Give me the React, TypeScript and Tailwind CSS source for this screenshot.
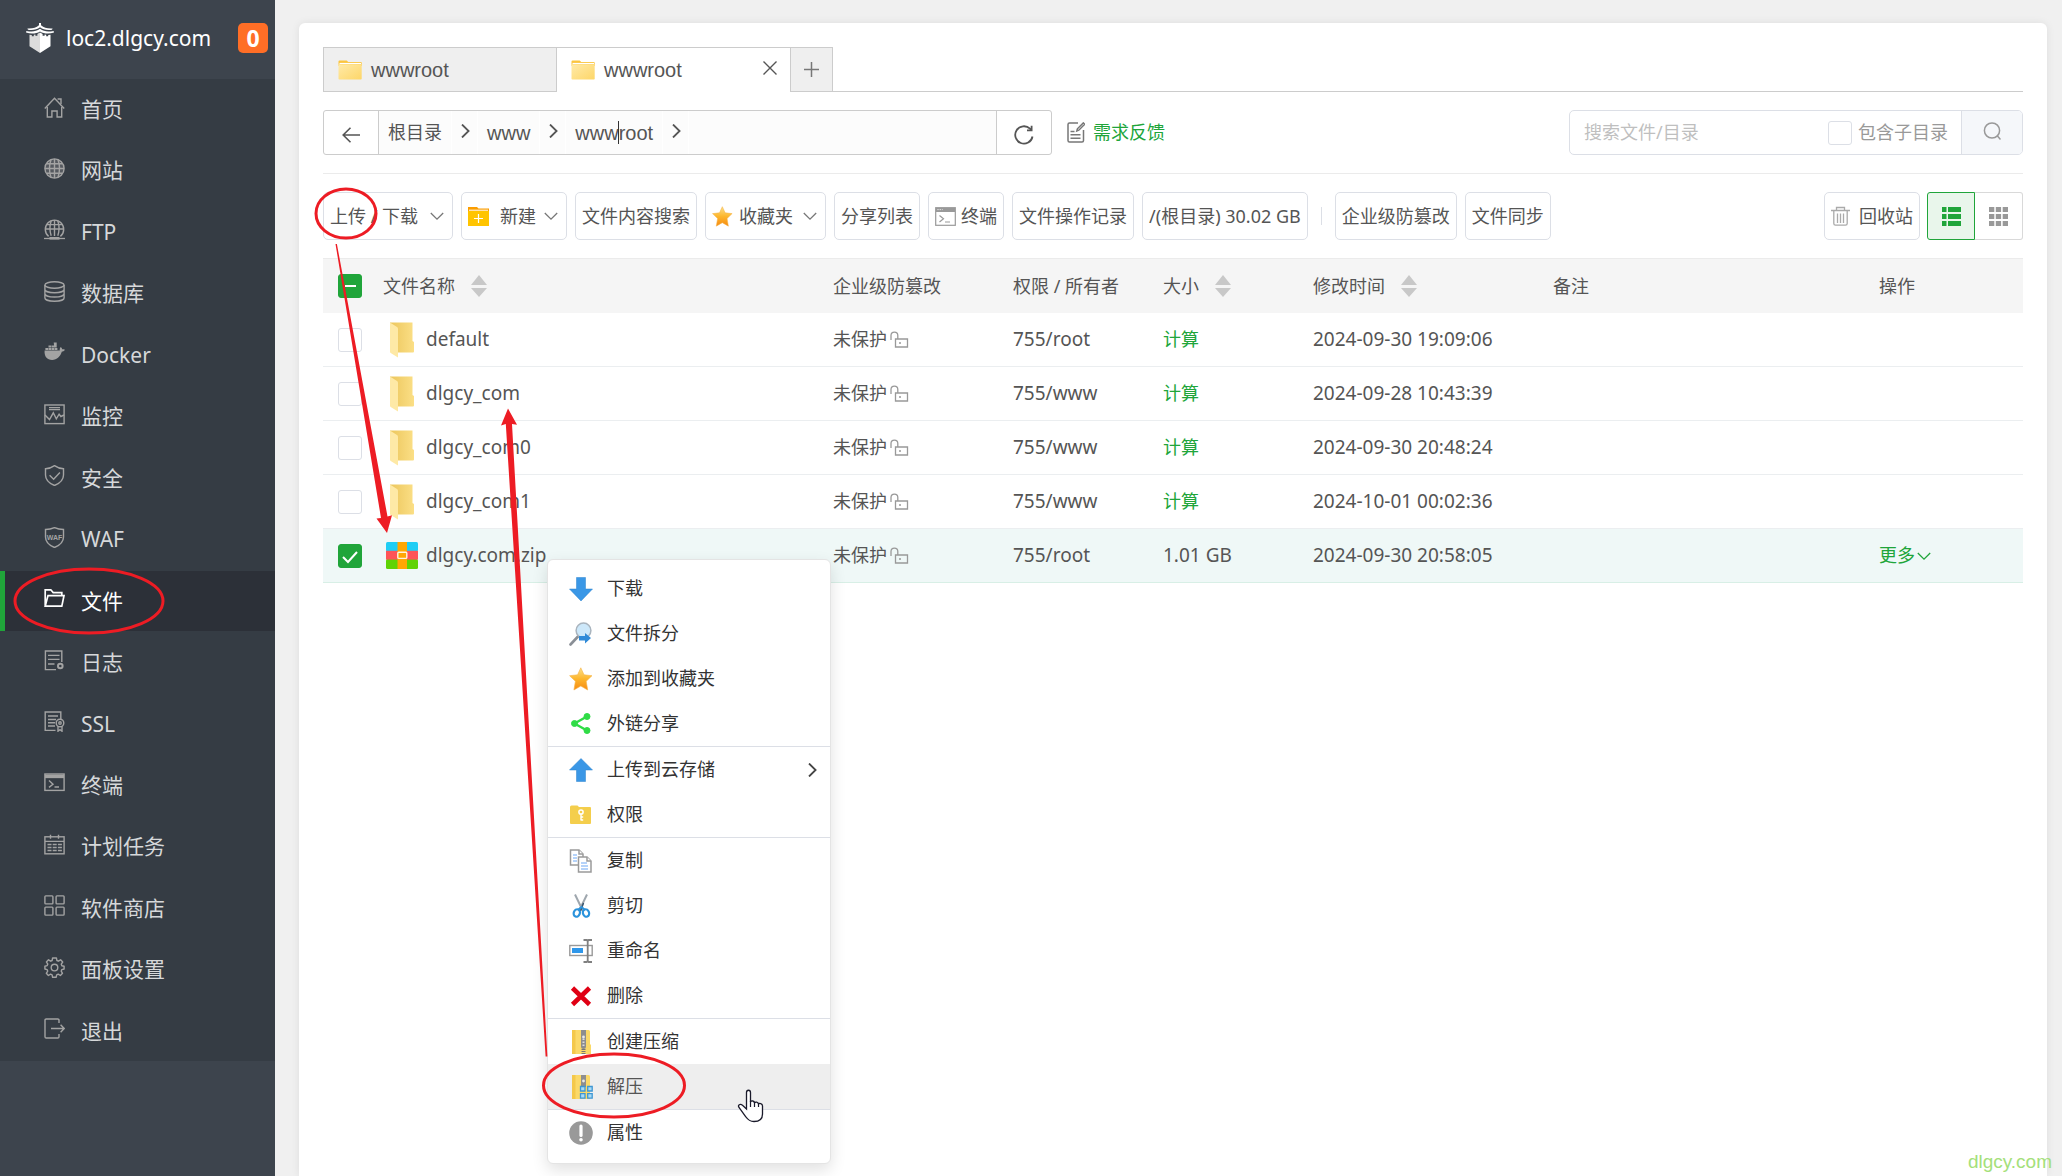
import { useState } from "react";
import type { ReactNode } from "react";
import clsx from "clsx";

/* ---------- icons ---------- */

function Line({ children, className }: { children: ReactNode; className?: string }) {
  return (
    <svg
      viewBox="0 0 21 21"
      fill="none"
      stroke="currentColor"
      strokeWidth="1.4"
      className={clsx("shrink-0", className ?? "size-[21px]")}
      aria-hidden="true"
    >
      {children}
    </svg>
  );
}

const navIcons: Record<string, ReactNode> = {
  home: (
    <>
      <path d="M.8 11.4 10.5 1.2l9.7 10.2" />
      <path d="M3.3 10v10h4.6v-6h5.2v6h4.6V10M13.6 2h3.4v5" />
    </>
  ),
  site: (
    <>
      <circle cx="10.5" cy="10.5" r="9.6" fill="currentColor" fillOpacity=".3" />
      <path d="M1 10.5h19M2.6 5.8h15.8M2.6 15.2h15.8M10.5 1v19M7 1.8c-1.8 5-1.8 12.4 0 17.4M14 1.8c1.8 5 1.8 12.4 0 17.4" />
    </>
  ),
  ftp: (
    <>
      <path d="M4.6 17.4a9.2 9.2 0 1 1 11.8 0" />
      <path d="M1.5 10h18M3 5.6h15M10.5 1v16M7.2 1.8c-1.6 5-1.6 10.5 0 15M13.8 1.8c1.6 5 1.6 10.5 0 15" />
      <path d="M0 19.5h21" strokeWidth="1.3" />
      <path d="M5.5 19.3h10" strokeWidth="2.6" />
    </>
  ),
  db: (
    <>
      <ellipse cx="10.5" cy="4" rx="9.6" ry="3.2" />
      <path d="M.9 4v13c0 1.8 4.3 3.2 9.6 3.2s9.6-1.4 9.6-3.2V4M.9 8.500c0 1.8 4.3 3.2 9.6 3.2s9.6-1.4 9.6-3.2M.9 12.8c0 1.8 4.3 3.2 9.6 3.2s9.6-1.4 9.6-3.2" />
    </>
  ),
  docker: (
    <g fill="currentColor" stroke="none">
      <path d="M.6 8.400h15.200c-.2-1.300.1-2.400.9-3.300.9.600 1.400 1.400 1.500 2.200.9-.2 1.800-.1 2.700.4-.5 1.200-1.500 1.800-3 1.900-1.600 5-4.800 8.300-9.800 8.300C3.200 17.900.1 14.400.6 8.400z" />
      <path d="M1.400 6h2.700v2H1.400zM4.500 6h2.700v2H4.500zM7.600 6h2.700v2H7.600zM10.700 6h2.700v2h-2.700zM4.500 3.400h2.700v2.200H4.500zM7.600 3.400h2.700v2.200H7.600zM9.700.4h3v5h-2.400z" />
    </g>
  ),
  monitor: (
    <>
      <rect x=".9" y="1" width="19.2" height="18.6" />
      <path d="M5 3.6h11M5 5.6h11" strokeWidth="1.2" />
      <path d="m1 11 4.5 4.6 3.8-6.8 3 6 2.8-4.6 1.8 2.3L20 11" />
    </>
  ),
  shield: (
    <>
      <path d="M10.5.6c2.8 2 5.7 3 9 3.1v6.2c0 4.5-3.1 8-9 10.6-5.9-2.6-9-6.1-9-10.6V3.7c3.3-.1 6.2-1.1 9-3.1z" />
      <path d="m5.6 10.3 4 4 6.3-6.8" />
    </>
  ),
  waf: (
    <>
      <path d="M10.5.6c2.8 1.3 5.7 1.9 9 1.9v7.4c0 4.5-3.1 8-9 10.6-5.900-2.6-9-6.1-9-10.6V2.5c3.3 0 6.2-.6 9-1.9z" />
      <text
        x="10.5"
        y="12.5"
        textAnchor="middle"
        fill="currentColor"
        stroke="none"
        className="font-['Liberation_Sans',Arial,sans-serif] text-[7px] font-bold"
      >
        WAF
      </text>
    </>
  ),
  folder: (
    <path d="M1.2 18V1.8h5.6l2.4 2.8h8.6v2.8M1.2 18.2 4 7.6h16L17.8 18.2z" strokeWidth="1.7" />
  ),
  log: (
    <>
      <path d="M12 19.6H1.4V1h16.4v11M4 5.4h11.5M4 9.4h11.5M4 14h6.5" />
      <circle cx="16.3" cy="16" r="2.3" strokeWidth="2" />
    </>
  ),
  ssl: (
    <>
      <path d="M11.5 19.4H1.2V1h15.6v7M4 5h10M4 8.5h8M4 11.8h7M4 15h7" />
      <circle cx="16" cy="12" r="3.8" />
      <circle cx="16" cy="12" r="1.2" />
      <path d="M14 15.2v5l2-1.5 2 1.5v-5" />
    </>
  ),
  terminal: (
    <>
      <rect x=".9" y="2" width="19.2" height="16.4" />
      <path d="M1 4.4h19" strokeWidth="3.5" />
      <path d="m5 8.6 4 3.6-4 3.2M10.5 15H15" />
    </>
  ),
  calendar: (
    <>
      <rect x=".9" y="2.8" width="19.2" height="17" />
      <path d="M6.5.8v4M14.5.8v4M1 7.4h19" />
      <path d="M3.5 10.5H18M3.5 13.5H18M3.5 16.5H18" strokeDasharray="4 1.2" />
    </>
  ),
  store: (
    <>
      <rect x=".9" y=".9" width="8" height="8" rx=".8" />
      <rect x="12.1" y=".9" width="8" height="8" rx=".8" />
      <rect x=".9" y="12.1" width="8" height="8" rx=".8" />
      <rect x="12.1" y="12.1" width="8" height="8" rx=".8" />
    </>
  ),
  gear: (
    <>
      <path
        strokeLinejoin="round"
        d="M8.6 1h3.8l.5 2.5 1.5.7 2.200-1.4 2.100 2.200-1.4 2.200.5 1.500 2.300.5v2.800l-2.300.6-.6 1.600 1.300 2.100-2.100 2.200-2.200-1.300-1.500.6-.6 2.500H8.600L8.100 17.800l-1.500-.6-2.200 1.300-2.100-2.200 1.400-2.200-.6-1.500L.9 12V9.200l2.300-.6.6-1.500-1.400-2.200 2.100-2.100 2.200 1.400 1.400-.7z"
      />
      <circle cx="10.5" cy="10.6" r="3.3" />
    </>
  ),
  exit: (
    <path d="M15 5V2.2C15 1.500 14.500 1 13.800 1H2.200C1.500 1 1 1.500 1 2.200v16.600c0 .7.500 1.200 1.200 1.200h11.600c.7 0 1.200-.5 1.200-1.200V16M7 10.500h13M16.600 6.700l3.600 3.800-3.600 3.800" />
  ),
};

function Logo() {
  return (
    <svg viewBox="0 0 28 30" className="h-[30px] w-7 shrink-0" fill="#fff" aria-hidden="true">
      <path d="M13 0h2v2.200c3 2.600 6 3.400 11.600 3.200L26 6.800C21 7.600 17 6.600 14 4.300 11 6.600 7 7.600 2 6.800L1.400 5.400C7 5.600 10 4.800 13 2.200z" />
      <path d="M14 5.800c4 3 8 3.200 13.600 2.200l.4 1.500c-5 1.600-10.400 1.200-14-1.100C10.400 10.700 5 11.100 0 9.500L.4 8C6 9 10 8.800 14 5.800z" />
      <path d="M14 9.600c1 .6 1.800 1 2.600 1.300v1.800h2v-1.300l1.600.3v1.600h2v-1.400l2.300-.1v11.400L14 30z" />
      <path d="M14 9.600c-1 .6-1.800 1-2.600 1.300v1.800h-2v-1.300l-1.600.3v1.600h-2v-1.400l-2.300-.1v11.400L14 30z" fill="#dcdcdc" />
    </svg>
  );
}

function Chevron({ dir = "down", className }: { dir?: "down" | "right"; className?: string }) {
  return (
    <svg
      viewBox="0 0 14 14"
      fill="none"
      stroke="currentColor"
      className={clsx("size-3.5 shrink-0", className)}
      aria-hidden="true"
    >
      {dir === "down" ? (
        <path d="M.8 4l6.2 6.200L13.200 4" strokeWidth="1.3" />
      ) : (
        <path d="M4 .5 10.600 7 4 13.500" strokeWidth="1.8" />
      )}
    </svg>
  );
}

function TabFolder() {
  return (
    <svg viewBox="0 0 24 20" className="h-5 w-6 shrink-0" aria-hidden="true">
      <defs>
        <linearGradient id="tabFolder" x1="0" x2="1" y1="0" y2="1">
          <stop offset="0" stopColor="#ffeaa8" />
          <stop offset="1" stopColor="#fdd668" />
        </linearGradient>
      </defs>
      <path d="M.5 1.5Q.5.5 1.500.5h7.200l1.500 1.500H23q.7 0 .7 1V6H.5z" fill="#fbc53f" />
      <path d="M1.500 3.500H23" stroke="#fff" strokeWidth="1.2" />
      <path d="M.5 4.300h23.200v14.400q0 .8-.8.8H1.300q-.8 0-.8-.8z" fill="url(#tabFolder)" />
    </svg>
  );
}

function RowFolder() {
  return (
    <svg viewBox="0 0 32 36" className="h-9 w-8 shrink-0" aria-hidden="true">
      <defs>
        <linearGradient id="rowFolder" x1="0" x2="1" y1="0" y2="0">
          <stop offset="0" stopColor="#ecc65c" />
          <stop offset="1" stopColor="#fbdf86" />
        </linearGradient>
      </defs>
      <path d="M4 .5h22.500V19l1.500 1v9.500q0 1-1 1H11z" fill="url(#rowFolder)" />
      <path d="M4 .5 11 5q1 .7 1 2v28.500L4.700 31Q4 30.500 4 29.500z" fill="#fee9a6" />
    </svg>
  );
}

function ZipIcon() {
  return (
    <svg viewBox="0 0 32 27" className="h-[27px] w-8 shrink-0" aria-hidden="true">
      <rect width="32" height="9.5" rx="1.5" fill="#1fcdf4" />
      <rect y="17" width="32" height="10" rx="1.5" fill="#5fd305" />
      <rect y="8.8" width="32" height="8.800" fill="#fe5457" />
      <rect x="11.5" width="9.5" height="27" fill="#ffa703" />
      <rect x="11.800" y="10.200" width="9" height="6.200" rx="1" fill="#ffa703" stroke="#fff3dc" strokeWidth="1.4" />
    </svg>
  );
}

function Star({ className = "size-6" }: { className?: string }) {
  return (
    <svg viewBox="0 0 24 24" className={clsx("shrink-0", className)} aria-hidden="true">
      <defs>
        <linearGradient id="star" x1="0" x2="0" y1="0" y2="1">
          <stop offset="0" stopColor="#fbe08a" />
          <stop offset=".5" stopColor="#fdb62c" />
          <stop offset="1" stopColor="#f68a12" />
        </linearGradient>
      </defs>
      <path
        d="m11.800.8 3.200 7 8 .9-5.800 5.600 1.500 8.700-6.900-4-6.900 4 1.500-8.700L.6 8.700l8-.9z"
        fill="url(#star)"
        stroke="#f6b344"
        strokeWidth=".6"
      />
    </svg>
  );
}

function WindowIcon() {
  return (
    <svg viewBox="0 0 21 19" className="h-[19px] w-[21px] shrink-0" fill="none" stroke="#999" aria-hidden="true">
      <rect x=".7" y=".7" width="19.6" height="17.6" strokeWidth="1.2" />
      <path d="M1 3h19" strokeWidth="4" />
      <path d="m4.500 8.500 4 3.300-4 3.200M10 15h5" strokeWidth="1.2" />
      <path d="M2.500 2.600h5" stroke="#fff" strokeDasharray="1 1.2" />
    </svg>
  );
}

function SortIcon() {
  return (
    <svg viewBox="0 0 16 22" className="h-[22px] w-4" fill="#c8c8c8" aria-hidden="true">
      <path d="M8 0l8 10H0zM0 13h16l-8 9z" />
    </svg>
  );
}

function LockIcon() {
  return (
    <svg
      viewBox="0 0 19 17"
      className="h-[17px] w-[19px] shrink-0"
      fill="none"
      stroke="#999"
      strokeWidth="1.3"
      aria-hidden="true"
    >
      <path d="M1 9V4.500a3.400 3.400 0 0 1 6.800 0V8M5.500 8h12v8h-12zM9 12h2" />
    </svg>
  );
}

const ctxIcons: Record<string, ReactNode> = {
  download: <path d="M7.500.5h9V12h7L12 24 .5 12h7z" fill="#3a97e6" stroke="#2b82cf" strokeWidth=".5" />,
  split: (
    <>
      <path d="M1.500 22.500 9 14.500" stroke="#8a8f96" strokeWidth="2.6" strokeLinecap="round" />
      <circle cx="14.5" cy="8.5" r="7.4" fill="#cde8fa" stroke="#a9b4be" strokeWidth="1.5" />
      <path d="M10 14h6v-3l6 5-6 5.500v-3h-6z" fill="#2f8ad8" />
    </>
  ),
  share: (
    <g fill="#2fdc46" stroke="#2fdc46">
      <path d="M18 4.500 5.500 11.500 18 18.500" fill="none" strokeWidth="2.4" />
      <circle cx="18" cy="4.500" r="3" />
      <circle cx="5.500" cy="11.500" r="3" />
      <circle cx="18" cy="18.500" r="3" />
    </g>
  ),
  upload: <path d="M7.500 23.500h9V12h7L12 .5.500 12h7z" fill="#3a97e6" stroke="#2b82cf" strokeWidth=".5" />,
  perm: (
    <>
      <path d="M1 4q0-1.500 1.500-1.500h6L10 4h11q1 0 1 1v15q0 1-1 1H2q-1 0-1-1z" fill="#f4ce4c" />
      <circle cx="12" cy="9" r="2.1" fill="none" stroke="#fff" strokeWidth="1.5" />
      <path d="M12 11v6.500M12 14h2.200M12 17h2.200" stroke="#fff" strokeWidth="1.4" />
    </>
  ),
  copy: (
    <g fill="#fff" stroke="#9a9a9a" strokeWidth="1.5">
      <path d="M1.500 1H10l4 4v11H1.500z" />
      <path d="M9.500 8H18l4 4v11H9.500z" />
      <path d="M18 8v4h4M10 1v4h4" />
      <path d="M4 6h4M4 9h4M4 12h4M12 14h6M12 17h7M12 20h7" stroke="#6ca8f5" strokeWidth="1.2" />
    </g>
  ),
  cut: (
    <>
      <path d="M6 .5 14 17M18 .5 10 17" stroke="#9fa7ae" strokeWidth="2" />
      <path d="m14.500 9-3 8" stroke="#36516a" strokeWidth="1.5" />
      <ellipse cx="7.8" cy="19" rx="3" ry="3.800" fill="none" stroke="#2b93dc" strokeWidth="2.2" transform="rotate(20 7.8 19)" />
      <ellipse cx="17" cy="19" rx="3" ry="3.800" fill="none" stroke="#2b93dc" strokeWidth="2.2" transform="rotate(-20 17 19)" />
      <path d="m9.500 15.500 3-2.500 3 2.500" stroke="#2b93dc" strokeWidth="2" fill="none" />
    </>
  ),
  rename: (
    <>
      <rect x=".8" y="6.500" width="22.400" height="10" fill="#fff" stroke="#999" strokeWidth="1.4" />
      <rect x="3" y="9" width="11" height="5" fill="#2f97ea" />
      <path d="M14.500 1h3.200l1 1 1-1H23M18.700 2v20M14.500 23h3.200l1-1 1 1H23" fill="none" stroke="#808080" strokeWidth="1.8" />
    </>
  ),
  remove: <path d="m3.500 4 17 16.500M20.500 4l-17 16.500" stroke="#e00014" strokeWidth="4.6" />,
  zip: (
    <>
      <path d="M3 0h16.500q1.500 0 1.500 1.500V14l1 1v9H3z" fill="#fbd968" />
      <path d="M3 0h3.500v24H3z" fill="#f4c84a" />
      <path d="M12 0h5v17q0 2-2.500 2T12 17z" fill="#8e8e8e" />
      <circle cx="14.500" cy="7" r="1.4" fill="#e9e9e9" />
      <path d="M14.500 8.500v9" stroke="#ddd" strokeDasharray="1.5 1.5" strokeWidth="2" />
      <path d="M14.500 19v5" stroke="#777" strokeDasharray="1 1" strokeWidth="4" />
    </>
  ),
  unzip: (
    <>
      <path d="M3 0h16.500q1.500 0 1.500 1.500V24H3z" fill="#fbd968" />
      <path d="M3 0h3.500v24H3z" fill="#f4c84a" />
      <path d="M12 0h5v12h-5z" fill="#8e8e8e" />
      <circle cx="14.500" cy="6" r="1.4" fill="#e9e9e9" />
      <path
        d="M11.500 11.500h4.500v4.500h-4.500zM18.700 11.500h4.500v4.500h-4.500zM11.500 18.700h4.500v4.500h-4.500zM18.700 18.700h4.500v4.500h-4.500z"
        fill="#a9dbf7"
        stroke="#3f97d2"
        strokeWidth="1.3"
      />
    </>
  ),
  info: (
    <>
      <circle cx="12" cy="12" r="11.8" fill="#999" />
      <path d="M12 5v9.500" stroke="#fff" strokeWidth="3.2" strokeLinecap="round" />
      <circle cx="12" cy="18.800" r="1.8" fill="#fff" />
    </>
  ),
};

/* ---------- data ---------- */

const nav = [
  { icon: "home", label: "首页" },
  { icon: "site", label: "网站" },
  { icon: "ftp", label: "FTP" },
  { icon: "db", label: "数据库" },
  { icon: "docker", label: "Docker" },
  { icon: "monitor", label: "监控" },
  { icon: "shield", label: "安全" },
  { icon: "waf", label: "WAF" },
  { icon: "folder", label: "文件", active: true },
  { icon: "log", label: "日志" },
  { icon: "ssl", label: "SSL" },
  { icon: "terminal", label: "终端" },
  { icon: "calendar", label: "计划任务" },
  { icon: "store", label: "软件商店" },
  { icon: "gear", label: "面板设置" },
  { icon: "exit", label: "退出" },
];

const files = [
  { name: "default", owner: "755/root", time: "2024-09-30 19:09:06" },
  { name: "dlgcy_com", owner: "755/www", time: "2024-09-28 10:43:39" },
  { name: "dlgcy_com0", owner: "755/www", time: "2024-09-30 20:48:24" },
  { name: "dlgcy_com1", owner: "755/www", time: "2024-10-01 00:02:36" },
  { name: "dlgcy.com.zip", owner: "755/root", size: "1.01 GB", time: "2024-09-30 20:58:05" },
];

const menuGroups = [
  [
    { icon: "download", label: "下载" },
    { icon: "split", label: "文件拆分" },
    { icon: "star", label: "添加到收藏夹" },
    { icon: "share", label: "外链分享" },
  ],
  [
    { icon: "upload", label: "上传到云存储", sub: true },
    { icon: "perm", label: "权限" },
  ],
  [
    { icon: "copy", label: "复制" },
    { icon: "cut", label: "剪切" },
    { icon: "rename", label: "重命名" },
    { icon: "remove", label: "删除" },
  ],
  [
    { icon: "zip", label: "创建压缩" },
    { icon: "unzip", label: "解压", hover: true },
  ],
  [{ icon: "info", label: "属性" }],
];

/* ---------- parts ---------- */

function Sidebar() {
  return (
    <aside className="w-[275px] shrink-0 bg-[#3d444d]">
      <div className="flex h-[79px] items-start pl-[26px] pr-[7px] pt-[23px]">
        <Logo />
        <span className="ml-3 text-[21px] leading-[30px] text-white">loc2.dlgcy.com</span>
        <span className="ml-auto size-[30px] rounded-[5px] bg-[#ff6e26] text-center text-[23px] font-bold leading-[30px] text-white">
          0
        </span>
      </div>
      <nav className="flex h-[982px] flex-col justify-between bg-[#353c44]">
        {nav.map((item) => (
          <a
            key={item.label}
            href="#"
            className={clsx(
              "flex h-[60px] items-center border-l-[5px] pl-[39px] text-[21px] leading-[30px]",
              item.active ? "border-[#20a53a] bg-[#2c3038] text-white" : "border-transparent text-[#d6d8da]",
            )}
          >
            <span className={clsx("mb-1", item.active ? "text-white" : "text-[#a3a3a3]")}>
              <Line>{navIcons[item.icon]}</Line>
            </span>
            <span className="ml-4">{item.label}</span>
          </a>
        ))}
      </nav>
    </aside>
  );
}

function Tabs() {
  return (
    <div className="flex h-[45px] border-b border-[#ccc] font-['Liberation_Sans',Arial,sans-serif] text-[20px] text-[#555]">
      <button className="flex h-[45px] w-[234px] items-center border border-[#ccc] bg-[#efefef] pl-3.5">
        <TabFolder />
        <span className="ml-[9px]">wwwroot</span>
      </button>
      <div className="flex h-[45px] w-[233px] items-center border-t border-[#ccc] bg-white pl-3.5 pr-[13px]">
        <button className="flex flex-1 items-center">
          <TabFolder />
          <span className="ml-[9px]">wwwroot</span>
        </button>
        <button aria-label="关闭" className="mb-1">
          <svg viewBox="0 0 14 14" className="size-3.5" stroke="#555" strokeWidth="1.4">
            <path d="M.5.5l13 13M13.500.5l-13 13" />
          </svg>
        </button>
      </div>
      <button
        aria-label="新标签"
        className="flex h-[45px] w-[43px] items-center justify-center border border-[#ccc] bg-[#efefef]"
      >
        <svg viewBox="0 0 15 15" className="size-[15px]" stroke="#777" strokeWidth="1.5">
          <path d="M7.500 0v15M0 7.500h15" />
        </svg>
      </button>
    </div>
  );
}

function PathBar() {
  return (
    <div className="mt-[18px] flex h-[45px] items-center justify-between">
      <div className="flex h-full items-center">
        <div className="flex h-full w-[729px] rounded-[3px] border border-[#ccc]">
          <button aria-label="后退" className="flex w-[55px] items-center justify-center border-r border-[#ccc]">
            <svg viewBox="0 0 18 16" className="mt-1 h-4 w-[18px]" fill="none" stroke="#555" strokeWidth="1.6">
              <path d="M18 8H1.500M8.500.8 1.200 8l7.300 7.200" />
            </svg>
          </button>
          <div className="flex flex-1 bg-[#fcfcfc] text-[18px] text-[#555]">
            {["根目录", "www", "wwwroot"].map((crumb, i) => (
              <div key={crumb} className="flex">
                <a
                  href="#"
                  className={clsx(
                    "flex items-center border-r border-white px-[9px]",
                    i > 0 && "font-['Liberation_Sans',Arial,sans-serif] text-[20px]",
                  )}
                >
                  {crumb}
                </a>
                <span className="flex w-[26px] items-center justify-center border-r border-white">
                  <Chevron dir="right" className="mb-1" />
                </span>
              </div>
            ))}
          </div>
          <button aria-label="刷新" className="flex w-[55px] items-center justify-center border-l border-[#ccc]">
            <svg viewBox="0 0 20 20" className="mt-1 size-5" fill="none" stroke="#555" strokeWidth="1.8">
              <path d="M18.500 11.500A8.700 8.700 0 1 1 16 3.700l1.200 1.200" />
              <path d="M17.600.8v4.600H13" />
            </svg>
          </button>
        </div>
        <a href="#" className="ml-[15px] flex items-center text-[18px] text-[#20a53a]">
          <svg
            viewBox="0 0 18 21"
            className="h-[21px] w-[18px]"
            fill="none"
            stroke="#777"
            strokeWidth="1.5"
            aria-hidden="true"
          >
            <path d="M11 1H2.500Q1 1 1 2.500v16Q1 20 2.500 20H15q1.500 0 1.500-1.500V8" />
            <path d="M3.500 9.500h4M3.500 12.800h10M3.500 16.200h10M9.800 9l.6-2.200L16.300.9l1.400 1.400-5.900 5.900z" />
          </svg>
          <span className="ml-2">需求反馈</span>
        </a>
      </div>

      <form className="flex h-full w-[454px] overflow-hidden rounded-[5px] border border-[#dcdfe6] text-[18px]">
        <input
          type="text"
          aria-label="搜索文件/目录"
          placeholder="搜索文件/目录"
          className="min-w-0 flex-1 pl-3.5 text-[#555] outline-none placeholder:text-[#bfbfbf]"
        />
        <label className="flex items-center gap-1.5 pr-[13px] text-[#999]">
          <input type="checkbox" className="size-6 appearance-none rounded-[3px] border border-[#dcdfe6] bg-white" />
          包含子目录
        </label>
        <button
          type="button"
          aria-label="搜索"
          className="flex w-[61px] items-center justify-center border-l border-[#dcdfe6] bg-[#f5f7fa]"
        >
          <svg viewBox="0 0 18 18" className="mb-1 size-[18px]" fill="none" stroke="#999" strokeWidth="1.5">
            <circle cx="9" cy="8.500" r="7.6" />
            <path d="m14 13.500 3.500 4" />
          </svg>
        </button>
      </form>
    </div>
  );
}

function ToolButton({ children }: { children: ReactNode }) {
  return (
    <button className="flex h-12 shrink-0 items-center rounded-[5px] border border-[#dcdfe6] bg-white px-1.5 text-[18px] text-[#555]">
      {children}
    </button>
  );
}

function Toolbar() {
  return (
    <div className="mt-[18px] flex items-center justify-between">
      <div className="flex items-center gap-2">
        <ToolButton>
          上传 / 下载 <Chevron className="ml-3 mr-0.5 text-[#777]" />
        </ToolButton>
        <ToolButton>
          <svg viewBox="0 0 21 19" className="h-[19px] w-[21px]" aria-hidden="true">
            <path d="M0 0h9l1.500 1.500H21V4H0z" fill="#fb9d00" />
            <path d="M0 4h21v15H0z" fill="#ffc400" />
            <path d="M1 3.200h19" stroke="#fff" />
            <path d="M10.500 7v9M6 11.500h9" stroke="#fff" strokeWidth="1.2" />
          </svg>
          <span className="ml-[11px] mr-2">新建</span>
          <Chevron className="mr-0.5 text-[#777]" />
        </ToolButton>
        <ToolButton>文件内容搜索</ToolButton>
        <ToolButton>
          <Star className="size-[21px]" />
          <span className="ml-1.5 mr-2.5">收藏夹</span>
          <Chevron className="mr-0.5 text-[#777]" />
        </ToolButton>
        <ToolButton>分享列表</ToolButton>
        <ToolButton>
          <WindowIcon />
          <span className="ml-[5px]">终端</span>
        </ToolButton>
        <ToolButton>文件操作记录</ToolButton>
        <ToolButton>/(根目录) 30.02 GB</ToolButton>
        <span className="mx-[5px] h-[18px] w-px bg-[#dcdfe6]" />
        <ToolButton>企业级防篡改</ToolButton>
        <ToolButton>文件同步</ToolButton>
      </div>
      <div className="flex items-center">
        <ToolButton>
          <svg
            viewBox="0 0 19 20"
            className="h-5 w-[19px]"
            fill="none"
            stroke="#aaa"
            strokeWidth="1.3"
            aria-hidden="true"
          >
            <path d="M0 4.500h19M5.500 4.500v-3h8v3M2.800 4.500v13q0 1.700 1.700 1.700h10q1.700 0 1.700-1.700v-13M6.500 7.500V17M9.500 7.500V17M12.500 7.500V17" />
          </svg>
          <span className="ml-[9px]">回收站</span>
        </ToolButton>
        <button
          aria-label="列表视图"
          className="ml-[7px] flex size-12 items-center justify-center rounded-l-[3px] border border-[#20a53a] bg-[#e9f6eb]"
        >
          <svg viewBox="0 0 19 19" className="size-[19px]" fill="#20a53a">
            <path d="M0 0h4.500v5H0zM6 0h13v5H6zM0 7h4.500v5H0zM6 7h13v5H6zM0 14h4.500v5H0zM6 14h13v5H6z" />
          </svg>
        </button>
        <button
          aria-label="网格视图"
          className="flex size-12 items-center justify-center rounded-r-[3px] border border-l-0 border-[#d9d9d9]"
        >
          <svg viewBox="0 0 19 19" className="size-[19px]" fill="#999">
            <path d="M0 0h5.300v5H0zM6.800 0h5.300v5H6.800zM13.700 0H19v5h-5.300zM0 7h5.300v5H0zM6.800 7h5.300v5H6.800zM13.700 7H19v5h-5.300zM0 14h5.300v5H0zM6.800 14h5.300v5H6.800zM13.700 14H19v5h-5.300z" />
          </svg>
        </button>
      </div>
    </div>
  );
}

type CheckBoxProps = { label: string; checked: boolean; mixed?: boolean; onChange: () => void };

function CheckBox({ label, checked, mixed, onChange }: CheckBoxProps) {
  const filled = checked || mixed;
  return (
    <span className="grid w-6 place-items-center">
      <input
        type="checkbox"
        aria-label={label}
        checked={checked}
        onChange={onChange}
        className={clsx(
          "size-6 appearance-none rounded-[3px] border [grid-area:1/1]",
          filled ? "border-[#20a53a] bg-[#20a53a]" : "border-[#dcdfe6] bg-white",
        )}
      />
      {filled && (
        <svg
          viewBox="0 0 24 24"
          className="pointer-events-none size-6 [grid-area:1/1]"
          fill="none"
          stroke="#fff"
          strokeWidth="2"
          aria-hidden="true"
        >
          <path d={mixed ? "M7 12h11" : "m5 13 5 5 9-10"} />
        </svg>
      )}
    </span>
  );
}

function FileTable() {
  const [picked, setPicked] = useState<string[]>(["dlgcy.com.zip"]);

  const toggle = (name: string) =>
    setPicked((prev) => (prev.includes(name) ? prev.filter((n) => n !== name) : [...prev, name]));

  const all = picked.length === files.length;

  return (
    <table className="mt-[18px] w-full table-fixed border-separate border-spacing-0 text-left text-[18px] text-[#555]">
      <colgroup>
        <col className="w-[60px]" />
        <col />
        <col className="w-[180px]" />
        <col className="w-[150px]" />
        <col className="w-[150px]" />
        <col className="w-[240px]" />
        <col className="w-[326px]" />
        <col className="w-[144px]" />
      </colgroup>
      <thead>
        <tr className="[&>th]:h-[55px] [&>th]:border-t [&>th]:border-[#ebebeb] [&>th]:bg-[#f5f5f5] [&>th]:font-normal">
          <th className="pl-[15px]">
            <CheckBox
              label="全选"
              checked={all}
              mixed={picked.length > 0 && !all}
              onChange={() => setPicked(all ? [] : files.map((f) => f.name))}
            />
          </th>
          <th>
            <button className="flex items-center gap-4">
              文件名称 <SortIcon />
            </button>
          </th>
          <th>企业级防篡改</th>
          <th>权限 / 所有者</th>
          <th>
            <button className="flex items-center gap-4">
              大小 <SortIcon />
            </button>
          </th>
          <th>
            <button className="flex items-center gap-4">
              修改时间 <SortIcon />
            </button>
          </th>
          <th>备注</th>
          <th>操作</th>
        </tr>
      </thead>
      <tbody>
        {files.map((file) => {
          const on = picked.includes(file.name);
          return (
            <tr
              key={file.name}
              className={clsx(
                "[&>td]:h-[54px] [&>td]:border-b",
                on ? "[&>td]:border-[#d8efe6] [&>td]:bg-[#eff8f7]" : "[&>td]:border-[#ebeef0]",
              )}
            >
              <td className="pl-[15px]">
                <CheckBox label={file.name} checked={on} onChange={() => toggle(file.name)} />
              </td>
              <td>
                <a href="#" className="flex items-center gap-2 pl-[3px] text-[19px]">
                  {file.size ? <ZipIcon /> : <RowFolder />}
                  {file.name}
                </a>
              </td>
              <td>
                <span className="flex items-center gap-[3px]">
                  未保护 <LockIcon />
                </span>
              </td>
              <td className="text-[19px]">{file.owner}</td>
              <td>
                {file.size ? (
                  <span className="text-[19px]">{file.size}</span>
                ) : (
                  <a href="#" className="text-[#20a53a]">
                    计算
                  </a>
                )}
              </td>
              <td className="text-[19px]">{file.time}</td>
              <td />
              <td>
                {on && (
                  <button className="flex items-center gap-0.5 text-[#20a53a]">
                    更多
                    <Chevron />
                  </button>
                )}
              </td>
            </tr>
          );
        })}
      </tbody>
    </table>
  );
}

function ContextMenu() {
  return (
    <div
      role="menu"
      className="absolute left-[547px] top-[559px] w-[284px] rounded-[6px] border border-[#e4e4e4] bg-white pb-2 pt-1.5 text-[18px] text-[#333] shadow-[0_6px_16px_rgba(0,0,0,0.12)]"
    >
      {menuGroups.map((group, i) => (
        <div key={group[0].label} className={clsx(i > 0 && "border-t border-[#dcdfe6]")}>
          {group.map((item) => (
            <button
              key={item.label}
              role="menuitem"
              className={clsx(
                "flex h-[45px] w-full items-center pl-[21px] pr-[11px]",
                "hover" in item && "bg-[#eee] text-[#555]",
              )}
            >
              {item.icon === "star" ? (
                <Star />
              ) : (
                <svg viewBox="0 0 24 24" className="size-6 shrink-0" aria-hidden="true">
                  {ctxIcons[item.icon]}
                </svg>
              )}
              <span className="ml-3.5">{item.label}</span>
              {"sub" in item && <Chevron dir="right" className="ml-auto text-[#444]" />}
            </button>
          ))}
        </div>
      ))}
    </div>
  );
}

// red marker strokes and the two pointers on top of everything
function Annotations() {
  return (
    <svg
      viewBox="0 0 2062 1176"
      className="pointer-events-none absolute left-0 top-0 h-[1176px] w-[2062px]"
      fill="none"
      aria-hidden="true"
    >
      <g stroke="#ed1c24" strokeWidth="3">
        <ellipse cx="346" cy="213.500" rx="30" ry="24.500" />
        <ellipse cx="89" cy="601" rx="74" ry="32" />
        <ellipse cx="614" cy="1085.500" rx="70.500" ry="31.500" />
      </g>
      <g fill="#ed1c24">
        <path d="M335.500 244h1.400L387.500 516.500l4.500-1.200L387 533l-10.500-14.500 4.500-.5z" />
        <path d="M545.600 1056.500h1.800L512 424l5 .7L508 408.500 501 425.500l4.800-1.500z" />
      </g>
      <path d="M618.500 121v23" stroke="#333" />
      <path
        d="M746.500 1109v-16.500c0-3 4-3 4 0v9.500c.5-1.500 4-1.500 4 1 .5-1.500 4-1.300 4 1.200.5-1.300 4-1 4 1.800v8c0 5-3 7.500-8.500 7.500-4 0-6-1.500-8-4.500l-7-9.500c-1.500-2.500 1-4 3.500-2.300z"
        fill="#fff"
        stroke="#1a1a2a"
        strokeWidth="1.3"
      />
      <path d="M750.500 1101v6M754.500 1102v5M758.500 1103v4" stroke="#1a1a2a" strokeWidth="1.2" />
    </svg>
  );
}

export default function App() {
  return (
    <div className="relative flex min-h-screen overflow-hidden bg-[#f0f0f0] font-['Noto_Sans','Noto_Sans_CJK_SC',sans-serif]">
      <Sidebar />
      <main className="ml-6 mr-[15px] mt-[23px] min-w-0 flex-1 rounded-t-[6px] bg-white px-6 pt-6 shadow-[0_0_8px_rgba(0,0,0,0.08)]">
        <Tabs />
        <PathBar />
        <div className="mt-[18px] h-px bg-[#ebebeb]" />
        <Toolbar />
        <FileTable />
      </main>
      <ContextMenu />
      <span className="absolute bottom-0 right-2.5 font-['Liberation_Sans',Arial,sans-serif] text-[19px] leading-7 text-[#a4e07a]">
        dlgcy.com
      </span>
      <Annotations />
    </div>
  );
}
